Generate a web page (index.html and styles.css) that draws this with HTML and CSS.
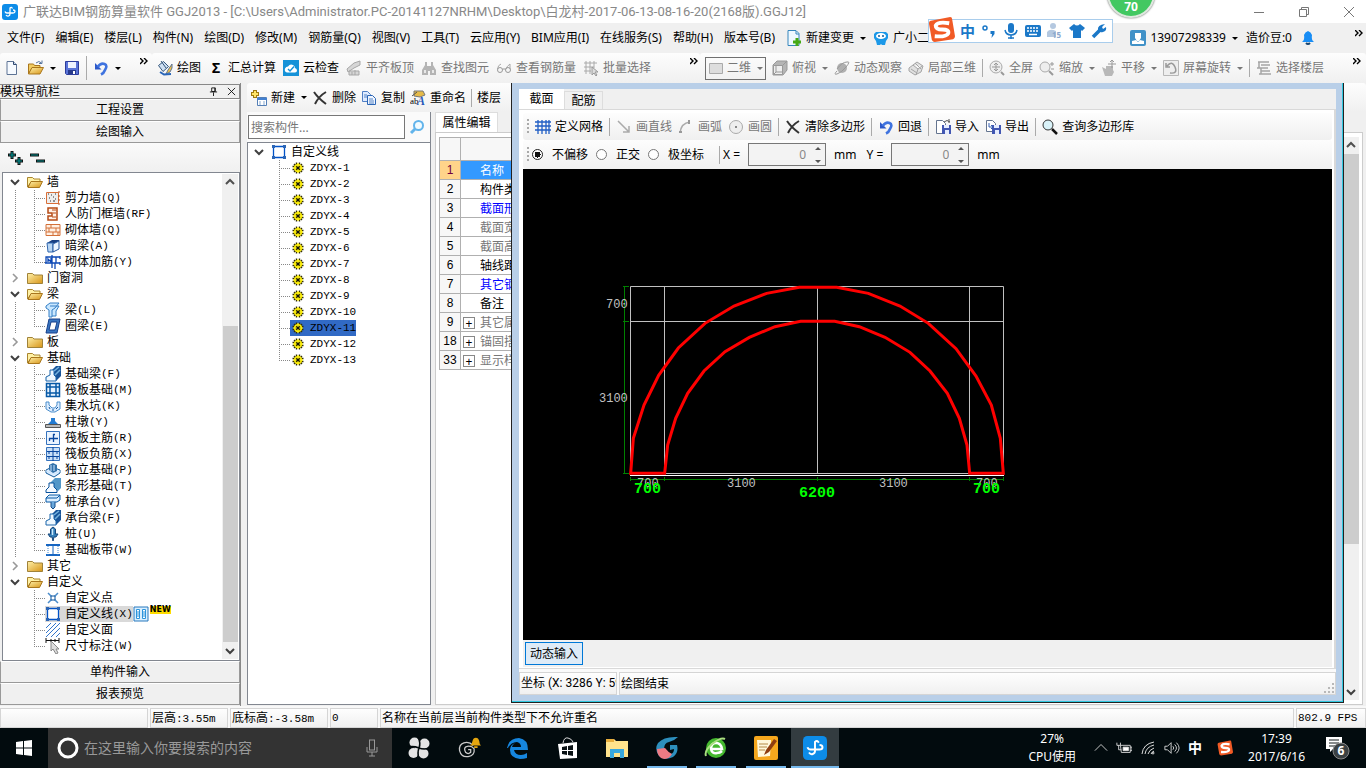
FILE: index.html
```html
<!DOCTYPE html>
<html lang="zh-CN">
<head>
<meta charset="utf-8">
<title>广联达BIM钢筋算量软件 GGJ2013</title>
<link rel="stylesheet" href="styles.css">
</head>
<body>
<svg class="sprite" aria-hidden="true">
  <defs>
    <linearGradient id="gold" x1="0" y1="0" x2="1" y2="1"><stop offset="0" stop-color="#fff0a8"/><stop offset="1" stop-color="#d79518"/></linearGradient>
  </defs>
  <symbol id="app" viewBox="0 0 16 16"><rect width="16" height="16" rx="3" fill="#0d8ce8"/><path d="M10.500 4.500Q9.500 2.500 8 4v6q0 1.500-1.500 2T4 11M3 7.500q.5 1.500 2 1.500h6q2 0 2-1.500T11 6" fill="none" stroke="#fff" stroke-width="1.300"/></symbol>
  <symbol id="new" viewBox="0 0 16 16"><path d="M3 1.500h6.500l3 3v10H3z" fill="#f6faff" stroke="#5d7395"/><path d="M9.500 1.500v3h3" fill="#c8d8f0" stroke="#30496f"/></symbol>
  <symbol id="open" viewBox="0 0 16 16"><path d="M.5 14V4h5l1 1.500H12V8H4z" fill="#f1cc62" stroke="#a9761c"/><path d="M.5 14L4 7.500h11.500L12 14z" fill="url(#gold)" stroke="#a9761c"/><path d="M8 3q3-3 5.500 0M14 .5v3h-3" fill="none" stroke="#56749e"/></symbol>
  <symbol id="save" viewBox="0 0 16 16"><path d="M1.500 1.500h13v13h-12l-1-1z" fill="#5a74d8" stroke="#2c3c9c"/><path d="M4 2h8v6H4z" fill="#eef3ff"/><path d="M4 10h8v4H4z" fill="#283a8c"/><path d="M9 11h2v3H9z" fill="#fff"/></symbol>
  <symbol id="undo" viewBox="0 0 16 16"><path d="M2 3v6.500h6.500z" fill="#2d58c8"/><path d="M4.500 7Q8 2.500 11.500 4T12 10q-1 3-4 4.500" fill="none" stroke="#3f73df" stroke-width="2.600"/></symbol>
  <symbol id="paint" viewBox="0 0 16 16"><path d="M1.500 5.500l5-4 5 5-5.500 5z" fill="#cfe0f2" stroke="#34567c"/><path d="M4 1l5 7" stroke="#34567c"/><path d="M15 4l-4 6-2 4 4-2 2-4z" fill="#f3c343" stroke="#5d7395"/><path d="M3 12l4 2.500L14 14" fill="none" stroke="#2965b8" stroke-width="2"/></symbol>
  <symbol id="cloud" viewBox="0 0 16 16"><rect width="16" height="16" fill="#1592d8"/><path d="M4 12.500q-3-1-2-4 1-2 3-2 2-3 5-1.500 2 1 2 3 2 .5 2 2.500t-2 2z" fill="#fff"/><path d="M5 9l2 2 4-4.500" fill="none" stroke="#1592d8" stroke-width="1.400"/></symbol>
  <symbol id="slab" viewBox="0 0 16 16"><path d="M1 9L8 3l6-2v4L8 8l-6 4zM3 11h10v4H3zM6 12v3M9 10v5" fill="#d6d6d6" stroke="#a7a7a7"/></symbol>
  <symbol id="find" viewBox="0 0 16 16"><path d="M4 2h2v4h4V2h2v3l3 5v5H9v-4H7v4H1v-5l3-5z" fill="#b4b4b4"/><path d="M3 10h2v3H3zm8 0h2v3h-2z" fill="#e8e8e8"/></symbol>
  <symbol id="glass" viewBox="0 0 16 16"><path d="M5 4Q2 5 1.500 9M10 9q1-3 4-5v5" fill="none" stroke="#aaa"/><circle cx="4" cy="10" r="2.500" fill="none" stroke="#999"/><circle cx="12" cy="10" r="2.500" fill="none" stroke="#999"/><path d="M6.500 9h3" stroke="#999"/></symbol>
  <symbol id="batch" viewBox="0 0 16 16"><path d="M1 3h13M1 7h10M1 11h7M3 1v13M7 1v13M11 1v7" stroke="#aaa"/><path d="M9 7v8l2-2 2 3 1-1-2-3h3z" fill="#ddd" stroke="#999"/></symbol>
  <symbol id="rect" viewBox="0 0 16 16"><path d="M1.500 3.500h13v10h-13z" fill="#ddd" stroke="#aaa"/></symbol>
  <symbol id="cube" viewBox="0 0 16 16"><path d="M1 5l4-4h10v9l-4 5H1z" fill="#b5b5b5" stroke="#999"/><path d="M1.500 5.500h9v9h-9z" fill="#eee" stroke="#999"/><path d="M10.500 5.500L15 1M4 6v6l-2 2M4 12h6" fill="none" stroke="#999"/></symbol>
  <symbol id="orbit" viewBox="0 0 16 16"><circle cx="8" cy="8" r="5" fill="#b0b0b0"/><path d="M3 11Q-1 15 3 14 7 13 12 7T13 2Q8 2 3 9" fill="none" stroke="#999"/></symbol>
  <symbol id="part" viewBox="0 0 16 16"><path d="M1 8l8-6 6 4-2 6-6 3-6-4zM5 5l5 4 4-3M10 9l-2 6M3 9l6 4M7 3l6 6" fill="#e0e0e0" stroke="#a5a5a5"/></symbol>
  <symbol id="full" viewBox="0 0 16 16"><circle cx="7" cy="7" r="6" fill="#eee" stroke="#aaa"/><path d="M12 12l3 3" stroke="#999" stroke-width="2"/><path d="M3 7h8M7 3v8M5 5l2-2 2 2M5 9l2 2 2-2" stroke="#999" fill="none"/></symbol>
  <symbol id="zoom" viewBox="0 0 16 16"><circle cx="6" cy="7" r="5" fill="#eee" stroke="#aaa"/><path d="M10 11l4 4" stroke="#999" stroke-width="2"/><path d="M11 4h4M13 2v4M12 9h3" stroke="#999"/></symbol>
  <symbol id="hand" viewBox="0 0 16 16"><path d="M1 7l4 2V6h7v4l1 2-2 4H4z" fill="#b8b8b8"/><path d="M7 4h8M11 0v8M9 2l2-2 2 2" stroke="#999" fill="none"/></symbol>
  <symbol id="rot" viewBox="0 0 16 16"><path d="M.5.5h15v15H.500z" fill="#eee" stroke="#b8b8b8"/><path d="M4 6q5-6 8 1t-5 6M3 3v4h4" fill="none" stroke="#999" stroke-width="1.500"/></symbol>
  <symbol id="floor" viewBox="0 0 16 16"><path d="M2 2h11M5 5h9M1 8h11M5 11h9M3 14h12M3 2v6M5 8v6" stroke="#a5a5a5" stroke-width="1.500"/></symbol>
  <symbol id="addc" viewBox="0 0 16 16"><path d="M4 0v8M0 4h8" stroke="#9e7b12" stroke-width="4"/><path d="M4 1v6M1 4h6" stroke="#ffe66b" stroke-width="2"/><path d="M6.500 7.500h9v8h-9z" fill="#fff" stroke="#547fb6"/><path d="M6 8h10v2H6z" fill="#4380d0"/><path d="M8 12h2m2 0h2m-6 2h2m2 0h2" stroke="#85a8cf"/></symbol>
  <symbol id="x" viewBox="0 0 16 16"><path d="M2 2q4 6 12 12M14 2Q7 6 3 14" fill="none" stroke="#333" stroke-width="2"/></symbol>
  <symbol id="copy" viewBox="0 0 16 16"><path d="M1.500 1.500h5l3 3v7h-8z" fill="#dfebff" stroke="#507fc4"/><path d="M6.500 5.500h5l3 3v6h-8z" fill="#eff5ff" stroke="#2b65b5"/><path d="M3 5h3M3 7h3M8 9h4M8 11h5M8 13h5" stroke="#5484c5"/></symbol>
  <symbol id="ren" viewBox="0 0 16 16"><path d="M4 1h9l2 4-5 2-6-1z" fill="#e5ba48" stroke="#777"/><path d="M2 6l5-4" stroke="#555"/><text x="0" y="14" font-size="9" font-family="Liberation Serif">ab</text><text x="7" y="15" font-size="12" font-weight="bold" font-style="italic" font-family="Liberation Serif" fill="#2557b8">A</text></symbol>
  <symbol id="mag" viewBox="0 0 16 16"><circle cx="9.500" cy="6.500" r="4.500" fill="#f1fbff" stroke="#62b4eb" stroke-width="2"/><path d="M6 10l-4 4" stroke="#62b4eb" stroke-width="3"/></symbol>
  <symbol id="mag2" viewBox="0 0 16 16"><circle cx="6" cy="6" r="5" fill="#d9f2f8" stroke="#333"/><path d="M10 10l5 5" stroke="#111" stroke-width="2.500"/></symbol>
  <symbol id="grid" viewBox="0 0 16 16"><path d="M3 1v14M7 1v14M11 1v14M14 1v14M0 3h16M0 7h16M0 11h16" stroke="#205ec4" stroke-width="1.300"/></symbol>
  <symbol id="line" viewBox="0 0 16 16"><path d="M2 2l11 11M13 7v6H7" fill="none" stroke="#aaa" stroke-width="1.500"/></symbol>
  <symbol id="arc" viewBox="0 0 16 16"><path d="M2 14Q3 4 12 3" fill="none" stroke="#aaa" stroke-width="1.500"/><path d="M1 13h3M11 1v4" stroke="#999" stroke-width="2"/></symbol>
  <symbol id="circ" viewBox="0 0 16 16"><circle cx="8" cy="8" r="6.500" fill="#eee" stroke="#aaa"/><path d="M8 7v2" stroke="#888" stroke-width="2"/></symbol>
  <symbol id="imp" viewBox="0 0 16 16"><path d="M1.500 1.500h6l3 3v10h-9z" fill="#fff" stroke="#64748f"/><path d="M7 6h9v9H7z" fill="#4257b2"/><path d="M9 6h5v3H9zM10 11h4v4h-4z" fill="#e6edff"/><path d="M9 3q3-3 6 0M14 0v4" fill="none" stroke="#555"/></symbol>
  <symbol id="exp" viewBox="0 0 16 16"><path d="M1.500 1.500h6l3 3v8h-9z" fill="#fff" stroke="#64748f"/><path d="M7 6h9v9H7z" fill="#4257b2"/><path d="M9 6h5v3H9zM10 11h4v4h-4z" fill="#e6edff"/><path d="M4 4v4h4M6 6l2 2-2 2" fill="none" stroke="#345eb2"/></symbol>
  <symbol id="change" viewBox="0 0 16 16"><path d="M2 .5h8l3 3v12H2z" fill="#eef8ff" stroke="#3686bd"/><path d="M10 1v3h3" fill="none" stroke="#3686bd"/><path d="M11 8v8M7 12h8" stroke="#45a914" stroke-width="3"/></symbol>
  <symbol id="robot" viewBox="0 0 16 16"><path d="M1 4l2-2h10l2 2v4l-2 3-1 4h-3l-1-1-1 1H4l-1-4-2-3z" fill="#1b98e8"/><ellipse cx="8" cy="6" rx="5" ry="3" fill="#fff"/><circle cx="6" cy="6" r="1" fill="#075c9f"/><circle cx="10" cy="6" r="1" fill="#075c9f"/></symbol>
  <symbol id="user" viewBox="0 0 16 16"><rect width="16" height="16" rx="2" fill="#4192c8"/><path d="M5 3h6v5l-2 3H7L5 8z" fill="#fff"/><path d="M2 14v-3l4-1 2 2 2-2 4 1v3z" fill="#fff"/></symbol>
  <symbol id="bell" viewBox="0 0 16 16"><path d="M2 12q3-2 2-7 1-3 4-4 3 1 4 4-1 5 2 7z" fill="#188df5"/><path d="M6 13q2 2 4 0" stroke="#174571" stroke-width="2" fill="none"/></symbol>
  <symbol id="more" viewBox="0 0 8 8"><path d="M0 0l3 3-3 3M4 0l3 3-3 3" fill="none" stroke="#000" stroke-width="1.400"/></symbol>
  <symbol id="down" viewBox="0 0 10 10"><path d="M1 3l4 4 4-4" fill="none" stroke="#404040" stroke-width="2"/></symbol>
  <symbol id="right" viewBox="0 0 10 10"><path d="M3 1l4 4-4 4" fill="none" stroke="#999" stroke-width="1.600"/></symbol>
  <symbol id="up" viewBox="0 0 10 10"><path d="M1 7l4-4 4 4" fill="none" stroke="#505050" stroke-width="2"/></symbol>
  <symbol id="fo" viewBox="0 0 16 16"><path d="M.5 13V3.500h5L7 5h6v3H4z" fill="#fff1a4" stroke="#a9852f"/><path d="M1 13.500l3-6h11.500l-3 6z" fill="url(#gold)" stroke="#a9761c"/></symbol>
  <symbol id="fc" viewBox="0 0 16 16"><path d="M.5 13.500v-10h5L7 5h8.500v8.500z" fill="url(#gold)" stroke="#a08239"/></symbol>
  <symbol id="poly" viewBox="0 0 16 16"><path d="M2.500 2.500h11v11h-11z" fill="#fff" stroke="#0052c8" stroke-width="1.300"/><path d="M1 1h3v3H1zM12 1h3v3h-3zM1 12h3v3H1zM12 12h3v3h-3z" fill="#2b65b5"/></symbol>
  <symbol id="gear" viewBox="0 0 16 16"><path d="M6.500 2.500v11M9.500 2.500v11M2.500 6.500h11M2.500 9.500h11M4 4l8 8M12 4l-8 8" stroke="#332f00" stroke-width="1.400"/><circle cx="8" cy="8" r="3.300" fill="none" stroke="#fff000" stroke-width="1.600"/><path d="M8 3v10M3 8h10" stroke="#fff000" stroke-width="1.200"/><circle cx="8" cy="8" r="1.300" fill="#111"/></symbol>
  <symbol id="t1" viewBox="0 0 16 16"><path d="M1.500 2.500h12v11h-12z" fill="#eee" stroke="#d96f38"/><path d="M3 4h1M6 5h1M10 4h1M4 8h1M8 7h1M5 11h1M10 9h1M8 11h2" stroke="#333"/><path d="M14 1v14" stroke="#b65020" stroke-dasharray="2 2"/></symbol>
  <symbol id="t2" viewBox="0 0 16 16"><path d="M3 2h9v12H3v-4h4V7H3z" fill="#fff1e6" stroke="#b64b16" stroke-width="1.500"/><path d="M7 4h4M8 7h3M7 11h4" stroke="#b64b16"/></symbol>
  <symbol id="t3" viewBox="0 0 16 16"><path d="M1 2.500h14v11H1zM1 6h14M1 10h14M6 2v4M11 6v4M4 6v4M8 10v4M13 10v4" fill="#fff0e3" stroke="#d37039"/></symbol>
  <symbol id="t4" viewBox="0 0 16 16"><path d="M2 5l5-3h8l-4 3z" fill="#183f82"/><path d="M2 5h6v9H3z" fill="#b9d6f3" stroke="#3167ae"/><path d="M8 6l6-3v8l-6 3z" fill="#edf6ff" stroke="#2356a0"/></symbol>
  <symbol id="t5" viewBox="0 0 16 16"><path d="M1 3h10v6H1zM7 1v13M10 9v6M0 9h12M11 3h4M15 2v3M11 9h4M15 8v3M3 8V5l3 3V4" fill="none" stroke="#0d48b5" stroke-width="1.300"/></symbol>
  <symbol id="t6" viewBox="0 0 16 16"><path d="M1 4l4-3h9l-4 5-3 2v7H4V8L1 6zM5 4h9l-3 5v5H7" fill="#c9e7ff" stroke="#347fc6"/></symbol>
  <symbol id="t7" viewBox="0 0 16 16"><path d="M4 1h11l-3 14H1z" fill="#3976c1" stroke="#163f8b"/><path d="M6 4h6l-2 8H4z" fill="#fff" stroke="#163f8b"/></symbol>
  <symbol id="t8" viewBox="0 0 16 16"><path d="M6 5l5-5h5v10l-5 5H8z" fill="#185499"/><path d="M1 14v-3l4-2V4h4v5l2 2v4H1z" fill="#eff8ff" stroke="#1a65aa"/><path d="M9 5l5-4M10 9l5-5" stroke="#75b3de" stroke-width="1.500"/></symbol>
  <symbol id="t9" viewBox="0 0 16 16"><path d="M1.500 1.500h13v13h-13zM5 2v12M11 2v12M2 5h12M2 11h12" fill="#e5f2ff" stroke="#0759a6" stroke-width="1.500"/></symbol>
  <symbol id="t10" viewBox="0 0 16 16"><path d="M1 4h3v3l3 3h3l2-3V4h3v7l-5 3H6l-5-3z" fill="#dcedff" stroke="#4b8ecc"/><path d="M4 9l1 2M7 12h2M11 11l2-2" stroke="#1457a0"/></symbol>
  <symbol id="t11" viewBox="0 0 16 16"><path d="M.5 10.500h15v3H.500z" fill="#bbb" stroke="#555"/><path d="M3 10l3-3V4h4v3l3 3z" fill="#237bd2"/></symbol>
  <symbol id="t12" viewBox="0 0 16 16"><path d="M1.500 1.500h13v13h-13z" fill="#eaf4ff" stroke="#3572bd"/><path d="M8.500 4v8M4 8.500h9M8 4.500h2M4.500 8v3" stroke="#08469e" stroke-width="1.300" fill="none"/></symbol>
  <symbol id="t13" viewBox="0 0 16 16"><path d="M1.500 1.500h13v13h-13z" fill="#c9e0f8" stroke="#3572bd"/><path d="M8 1v14M2 5.500h12M2 10.500h12M4 5v3M12 5v3M4 10v3M12 10v3" stroke="#08469e"/></symbol>
  <symbol id="t14" viewBox="0 0 16 16"><path d="M1 8l6-3 8 3v3l-6 4-8-4z" fill="#deefff" stroke="#135c9e"/><path d="M4 3l4-2 4 2v6L8 11 4 8z" fill="#3271aa"/><path d="M6 3v6M9 3v6M1 9l8 3 6-3" stroke="#cce5ff" fill="none"/></symbol>
  <symbol id="t15" viewBox="0 0 16 16"><path d="M5 5l5-5h6v10l-3 3z" fill="#5297c8"/><path d="M1 14.500V12l3-3V5h5v4l3 3v2.500z" fill="#f5faff" stroke="#07509b"/></symbol>
  <symbol id="t16" viewBox="0 0 16 16"><path d="M1 4l3-3h11v5l-3 2H1z" fill="#dcefff" stroke="#0759a6"/><path d="M6 8v5l2 2 2-2V8" fill="#69a8dc" stroke="#174c87"/><path d="M1 4h11l3-3" stroke="#0759a6" fill="none"/></symbol>
  <symbol id="t17" viewBox="0 0 16 16"><path d="M5.500 3L8 1l2.500 2v5H13l-2 3H9l-1 4-1-4H5L3 8h2.500z" fill="#347fb9" stroke="#17477b"/><path d="M7.500 3v6" stroke="#cce9fb" stroke-width="1.500"/></symbol>
  <symbol id="t18" viewBox="0 0 16 16"><path d="M1 3h14M1 13h14" stroke="#1766c2" stroke-width="2"/><path d="M3 4v9M13 4v9" stroke="#4386cd" stroke-dasharray="1 1"/><path d="M8 3v10" stroke="#1766c2"/></symbol>
  <symbol id="t19" viewBox="0 0 16 16"><path d="M3 3l4 4M13 3L9 7M3 13l4-4M13 13L9 9" stroke="#4a8cca" stroke-width="1.500"/><path d="M6 6h4v4H6z" fill="#fff" stroke="#07509b"/></symbol>
  <symbol id="t20" viewBox="0 0 16 16"><path d="M1 6l5-5M1 11L11 1M1 15L15 1M6 15l9-9M11 15l4-4" stroke="#3275ca"/></symbol>
  <symbol id="t21" viewBox="0 0 16 16"><path d="M1 0v5M14 0v5M1 2.500h13M6 1v3M10 1v3" stroke="#111"/><path d="M6 3v10l2-2 3 5 2-1-2-4h3z" fill="#ddd" stroke="#888"/></symbol>
  <symbol id="book" viewBox="0 0 16 16"><path d="M1 1h14v14H1z" fill="#d9efff" stroke="#2879bd"/><path d="M3.500 3.500h3v9h-3zM9.500 3.500h3v9h-3zM4 6h2M4 8h2M4 10h2M10 6h2M10 8h2M10 10h2" fill="#fff" stroke="#2c94dc"/></symbol>
  <symbol id="sogou" viewBox="0 0 28 28"><path d="M3 5l20-4q2 0 2 2l3 18q0 2-2 3L7 27q-2 0-3-2L1 8q0-3 2-3z" fill="#f15a25"/><path d="M22 7.500Q10 5.500 8 10q0 4 7 4 7 0 6 4-2 4-14 3" fill="none" stroke="#fff" stroke-width="4"/></symbol>
</svg>

<header class="title">
  <svg class="ic"><use href="#app"/></svg>
  <h1>广联达BIM钢筋算量软件 GGJ2013 - [C:\Users\Administrator.PC-20141127NRHM\Desktop\白龙村-2017-06-13-08-16-20(2168版).GGJ12]</h1>
  <div class="winbtns">
    <button aria-label="最小化"><svg viewBox="0 0 12 12"><path d="M1 6.500h10"/></svg></button>
    <button aria-label="还原"><svg viewBox="0 0 12 12"><path d="M1.500 3.500h7v7h-7zM3.500 3.500v-2h7v7h-2"/></svg></button>
    <button aria-label="关闭"><svg viewBox="0 0 12 12"><path d="M1 1l10 10M11 1L1 11"/></svg></button>
  </div>
</header>

<nav class="menu">
  <button>文件(F)</button><button>编辑(E)</button><button>楼层(L)</button><button>构件(N)</button><button>绘图(D)</button><button>修改(M)</button><button>钢筋量(Q)</button><button>视图(V)</button><button>工具(T)</button><button>云应用(Y)</button><button>BIM应用(I)</button><button>在线服务(S)</button><button>帮助(H)</button><button>版本号(B)</button>
  <button class="tb"><svg class="ic"><use href="#change"/></svg>新建变更<b class="caret"></b></button>
  <button class="tb"><svg class="ic"><use href="#robot"/></svg>广小二</button>
  <div class="account">
    <button class="tb"><svg class="ic"><use href="#user"/></svg>13907298339<b class="caret"></b></button>
    <span>造价豆:0</span><svg class="ic"><use href="#bell"/></svg>
    <svg class="more"><use href="#more"/></svg>
  </div>
</nav>

<div class="toolbar">
  <div class="bar files">
    <button aria-label="新建"><svg class="ic"><use href="#new"/></svg></button>
    <button class="tb" aria-label="打开"><svg class="ic"><use href="#open"/></svg><b class="caret"></b></button>
    <button aria-label="保存"><svg class="ic"><use href="#save"/></svg></button><i class="sep"></i>
    <button class="tb" aria-label="撤销"><svg class="ic"><use href="#undo"/></svg><b class="caret"></b></button>
    <svg class="more"><use href="#more"/></svg>
  </div>
  <div class="bar edit">
    <button class="tb"><svg class="ic"><use href="#paint"/></svg>绘图</button>
    <button class="tb"><span class="sigma">Σ</span>汇总计算</button>
    <button class="tb"><svg class="ic"><use href="#cloud"/></svg>云检查</button>
    <button class="tb" disabled><svg class="ic"><use href="#slab"/></svg>平齐板顶</button>
    <button class="tb" disabled><svg class="ic"><use href="#find"/></svg>查找图元</button>
    <button class="tb" disabled><svg class="ic"><use href="#glass"/></svg>查看钢筋量</button>
    <button class="tb" disabled><svg class="ic"><use href="#batch"/></svg>批量选择</button>
    <svg class="more"><use href="#more"/></svg>
  </div>
  <div class="bar view">
    <label class="combo"><svg class="ic"><use href="#rect"/></svg><select disabled aria-label="视图维度"><option>二维</option></select><b class="caret"></b></label>
    <button class="tb" disabled><svg class="ic"><use href="#cube"/></svg>俯视<b class="caret"></b></button>
    <button class="tb" disabled><svg class="ic"><use href="#orbit"/></svg>动态观察</button>
    <button class="tb" disabled><svg class="ic"><use href="#part"/></svg>局部三维</button><i class="sep"></i>
    <button class="tb" disabled><svg class="ic"><use href="#full"/></svg>全屏</button>
    <button class="tb" disabled><svg class="ic"><use href="#zoom"/></svg>缩放<b class="caret"></b></button>
    <button class="tb" disabled><svg class="ic"><use href="#hand"/></svg>平移<b class="caret"></b></button>
    <button class="tb" disabled><svg class="ic"><use href="#rot"/></svg>屏幕旋转<b class="caret"></b></button><i class="sep"></i>
    <button class="tb" disabled><svg class="ic"><use href="#floor"/></svg>选择楼层</button>
    <svg class="more"><use href="#more"/></svg>
  </div>
</div>

<main class="work">
  <aside class="nav">
    <div class="navhead"><h2>模块导航栏</h2>
      <button aria-label="固定"><svg viewBox="0 0 10 10"><path d="M3 1h4v4H3zM1 5.500h8M5 6v4M6.500 1v4"/></svg></button>
      <button aria-label="关闭"><svg viewBox="0 0 10 10"><path d="M1 1l8 8M9 1L1 9"/></svg></button></div>
    <button class="fold">工程设置</button>
    <button class="fold">绘图输入</button>
    <div class="pm"><svg viewBox="0 0 42 16"><path d="M6 1v8M2 5h8M13 7v8M9 11h8M24 5h9M30 11h9" stroke="#111" stroke-width="3"/><path d="M6 2v6M3 5h6M13 8v6M10 11h6M25 5h7M31 11h7" stroke="#008c8c" stroke-width="1.200"/></svg></div>
    <div class="treebox">
      <ul class="tree">
        <li><div class="node"><svg><use href="#down"/></svg><svg class="ic"><use href="#fo"/></svg>墙</div>
          <ul class="kids pass"><li><svg class="ic"><use href="#t1"/></svg>剪力墙<span class="en">(Q)</span></li><li><svg class="ic"><use href="#t2"/></svg>人防门框墙<span class="en">(RF)</span></li><li><svg class="ic"><use href="#t3"/></svg>砌体墙<span class="en">(Q)</span></li><li><svg class="ic"><use href="#t4"/></svg>暗梁<span class="en">(A)</span></li><li><svg class="ic"><use href="#t5"/></svg>砌体加筋<span class="en">(Y)</span></li></ul></li>
        <li><div class="node"><svg><use href="#right"/></svg><svg class="ic"><use href="#fc"/></svg>门窗洞</div></li>
        <li><div class="node"><svg><use href="#down"/></svg><svg class="ic"><use href="#fo"/></svg>梁</div>
          <ul class="kids pass"><li><svg class="ic"><use href="#t6"/></svg>梁<span class="en">(L)</span></li><li><svg class="ic"><use href="#t7"/></svg>圈梁<span class="en">(E)</span></li></ul></li>
        <li><div class="node"><svg><use href="#right"/></svg><svg class="ic"><use href="#fc"/></svg>板</div></li>
        <li><div class="node"><svg><use href="#down"/></svg><svg class="ic"><use href="#fo"/></svg>基础</div>
          <ul class="kids pass"><li><svg class="ic"><use href="#t8"/></svg>基础梁<span class="en">(F)</span></li><li><svg class="ic"><use href="#t9"/></svg>筏板基础<span class="en">(M)</span></li><li><svg class="ic"><use href="#t10"/></svg>集水坑<span class="en">(K)</span></li><li><svg class="ic"><use href="#t11"/></svg>柱墩<span class="en">(Y)</span></li><li><svg class="ic"><use href="#t12"/></svg>筏板主筋<span class="en">(R)</span></li><li><svg class="ic"><use href="#t13"/></svg>筏板负筋<span class="en">(X)</span></li><li><svg class="ic"><use href="#t14"/></svg>独立基础<span class="en">(P)</span></li><li><svg class="ic"><use href="#t15"/></svg>条形基础<span class="en">(T)</span></li><li><svg class="ic"><use href="#t16"/></svg>桩承台<span class="en">(V)</span></li><li><svg class="ic"><use href="#t8"/></svg>承台梁<span class="en">(F)</span></li><li><svg class="ic"><use href="#t17"/></svg>桩<span class="en">(U)</span></li><li><svg class="ic"><use href="#t18"/></svg>基础板带<span class="en">(W)</span></li></ul></li>
        <li><div class="node"><svg><use href="#right"/></svg><svg class="ic"><use href="#fc"/></svg>其它</div></li>
        <li><div class="node"><svg><use href="#down"/></svg><svg class="ic"><use href="#fo"/></svg>自定义</div>
          <ul class="kids"><li><svg class="ic"><use href="#t19"/></svg>自定义点</li><li><span class="cur"><svg class="ic"><use href="#poly"/></svg>自定义线<span class="en">(X)</span></span><svg class="ic"><use href="#book"/></svg><em class="newtag">NEW</em></li><li><svg class="ic"><use href="#t20"/></svg>自定义面</li><li><svg class="ic"><use href="#t21"/></svg>尺寸标注<span class="en">(W)</span></li></ul></li>
      </ul>
      <div class="scroll low"><svg><use href="#up"/></svg><i></i><svg><use href="#down"/></svg></div>
    </div>
    <button class="fold">单构件输入</button>
    <button class="fold">报表预览</button>
  </aside>

  <section class="right">
    <div class="bar parts">
      <button class="tb"><svg class="ic"><use href="#addc"/></svg>新建<b class="caret"></b></button>
      <button class="tb"><svg class="ic"><use href="#x"/></svg>删除</button>
      <button class="tb"><svg class="ic"><use href="#copy"/></svg>复制</button>
      <button class="tb"><svg class="ic"><use href="#ren"/></svg>重命名</button><i class="sep"></i>
      <button class="tb">楼层</button>
    </div>
    <div class="cols">
      <div class="comps">
        <div class="search"><input type="text" placeholder="搜索构件..." aria-label="搜索构件"><button aria-label="搜索"><svg class="ic"><use href="#mag"/></svg></button></div>
        <div class="complist">
          <div class="node"><svg><use href="#down"/></svg><svg class="ic"><use href="#poly"/></svg>自定义线</div>
          <ul class="kids gears">
            <li><svg class="ic"><use href="#gear"/></svg><span class="en">ZDYX-1</span></li><li><svg class="ic"><use href="#gear"/></svg><span class="en">ZDYX-2</span></li><li><svg class="ic"><use href="#gear"/></svg><span class="en">ZDYX-3</span></li><li><svg class="ic"><use href="#gear"/></svg><span class="en">ZDYX-4</span></li><li><svg class="ic"><use href="#gear"/></svg><span class="en">ZDYX-5</span></li><li><svg class="ic"><use href="#gear"/></svg><span class="en">ZDYX-6</span></li><li><svg class="ic"><use href="#gear"/></svg><span class="en">ZDYX-7</span></li><li><svg class="ic"><use href="#gear"/></svg><span class="en">ZDYX-8</span></li><li><svg class="ic"><use href="#gear"/></svg><span class="en">ZDYX-9</span></li><li><svg class="ic"><use href="#gear"/></svg><span class="en">ZDYX-10</span></li><li><span class="cur sel"><svg class="ic"><use href="#gear"/></svg><span class="en">ZDYX-11</span></span></li><li><svg class="ic"><use href="#gear"/></svg><span class="en">ZDYX-12</span></li><li><svg class="ic"><use href="#gear"/></svg><span class="en">ZDYX-13</span></li>
          </ul>
        </div>
      </div>
      <div class="props">
        <button class="ptab">属性编辑</button>
        <div class="pbody">
          <table>
            <thead><tr><th></th><th></th></tr></thead>
            <tbody>
              <tr class="on"><th>1</th><td>名称</td></tr>
              <tr><th>2</th><td>构件类型</td></tr>
              <tr class="blue"><th>3</th><td>截面形状</td></tr>
              <tr class="gray"><th>4</th><td>截面宽度</td></tr>
              <tr class="gray"><th>5</th><td>截面高度</td></tr>
              <tr><th>6</th><td>轴线距左边线</td></tr>
              <tr class="blue"><th>7</th><td>其它钢筋</td></tr>
              <tr><th>8</th><td>备注</td></tr>
              <tr class="gray"><th>9</th><td class="more-row"><button aria-label="展开">+</button>其它属性</td></tr>
              <tr class="gray"><th>18</th><td class="more-row"><button aria-label="展开">+</button>锚固搭接</td></tr>
              <tr class="gray"><th>33</th><td class="more-row"><button aria-label="展开">+</button>显示样式</td></tr>
            </tbody>
          </table>
          <div class="scroll high"><svg><use href="#up"/></svg><i></i><svg><use href="#down"/></svg></div>
        </div>
      </div>
    </div>
  </section>
</main>

<footer class="status"><span class="s1"></span><span class="s2">层高<span class="en">:3.55m</span></span><span class="s3">底标高<span class="en">:-3.58m</span></span><span class="s4 en">0</span><span class="s5">名称在当前层当前构件类型下不允许重名</span><span class="s6 en">802.9 FPS</span></footer>

<footer class="taskbar">
  <button class="start" aria-label="开始"><svg viewBox="0 0 16 16"><path d="M0 2l7-1v6.500H0zM8 1l8-1v7.500H8zM0 8.500h7V15l-7-1zM8 8.500h8V16l-8-1z" fill="#fff"/></svg></button>
  <label class="ask"><svg viewBox="0 0 22 22"><circle cx="11" cy="11" r="9" fill="none" stroke="#fff" stroke-width="3"/></svg><input type="text" placeholder="在这里输入你要搜索的内容" aria-label="搜索"><svg class="mic" viewBox="0 0 12 18"><rect x="3.500" y="1" width="5" height="10" fill="none" stroke="#999"/><path d="M1 8v5h10V8M6 13v4M3 17h6" fill="none" stroke="#999"/></svg></label>
  <div class="apps">
    <button aria-label="搜狗"><svg viewBox="0 0 24 24"><g fill="#e4e4e4"><circle cx="7.500" cy="6.500" r="5"/><circle cx="17.500" cy="7.500" r="5"/><circle cx="6.500" cy="17" r="5"/><circle cx="16.500" cy="17.500" r="5"/><circle cx="12" cy="12" r="4"/></g><path d="M12 12Q14 7 11 1M12 12q5 2 11 0M12 12q-2 5 0 11M12 12q-5-2-11-1" fill="none" stroke="#020a0c" stroke-width="1.600"/></svg></button>
    <button aria-label="提醒"><svg viewBox="0 0 28 28"><path d="M19 11Q14 6 8 8T3 17q2 8 10 7t7-9q-3-4-8-3t-2 7q3 3 6 0v-3h-3" fill="none" stroke="#ccc" stroke-width="1.500"/><path d="M15 11q3-2 3-5 1-4 4-4 3 0 4 4 0 3 2 5zM20 12h4v2h-4z" fill="#e5a60e"/></svg></button>
    <button aria-label="Edge"><svg viewBox="0 0 24 24"><path d="M1 12Q3 2 13 2q9 1 9 12H8q1 5 7 5 3 0 6-2v5q-3 1-7 1-10-1-10-9 0-5 5-7-3 2-3 4h9q0-4-4-5-6 0-9 6z" fill="#1686df"/></svg></button>
    <button aria-label="商店"><svg viewBox="0 0 24 24"><path d="M2 8l19-2v16l-17 1z" fill="#fff"/><path d="M7 7q1-6 5-5t5 4" fill="none" stroke="#ddd"/><path d="M6 11l5-1v4H6zM12 10l5-1v5h-5zM6 15h5v4l-5-1zM12 15h5v5l-5-1z" fill="#091114"/></svg></button>
    <button aria-label="文件资源管理器"><svg viewBox="0 0 24 24"><path d="M1 3h8l2 2h12v16H1z" fill="#ffe38c"/><path d="M1 3h8v3H1z" fill="#e9af3d"/><path d="M5 13h14v9h-4v-5H9v5H5z" fill="#38a7dc"/></svg></button>
    <button class="run" aria-label="浏览器"><svg viewBox="0 0 24 24"><path d="M23 1Q19 5 14 6 9 7 9 13q0 4 4 5h3q3-1 3-5l-4 1V9h7q2 8-4 12-8 4-14-1-5-7-1-13Q9 0 23 1z" fill="#2d8fbd"/><path d="M2 13l8-1q3 4 7 6-4 7-11 4-4-3-4-9z" fill="#ef7b84"/></svg></button>
    <button class="run" aria-label="360"><svg viewBox="0 0 24 24"><circle cx="12" cy="12" r="10" fill="#45b82f"/><path d="M6 13h12q-1-6-6-6t-5 6q1 5 6 4 3 0 5-2" fill="none" stroke="#fff" stroke-width="2.500"/><path d="M2 20Q0 15 8 8 17 1 21 3" fill="none" stroke="#a8df7f" stroke-width="2"/></svg></button>
    <button class="run" aria-label="笔记"><svg viewBox="0 0 24 24"><rect width="24" height="24" rx="2" fill="#f5a71d"/><path d="M3 4h14l-1 16-12 1z" fill="#fff8dc"/><path d="M5 8h9M5 11h8M5 14h6" stroke="#b48a49"/><path d="M20 3l-8 11-2 5 5-3 8-11z" fill="#8f3d0f"/></svg></button>
    <button class="run active" aria-label="广联达"><svg><use href="#app"/></svg></button>
  </div>
  <div class="tray">
    <div class="cpu">27%<br>CPU使用</div>
    <svg viewBox="0 0 16 16" class="w14"><path d="M1 11l7-7 7 7"/></svg>
    <svg viewBox="0 0 18 16"><path d="M5 5h11v8H6zM16 7h2v4h-2M1 2v3h4V2M3 5v5h3"/><path d="M8 7h6v4H8z" fill="#fff"/></svg>
    <svg viewBox="0 0 16 16"><path d="M2 14Q3 4 14 2M5 14q1-7 9-9M8 14q1-4 6-6M11 14q1-2 3-3"/><circle cx="13" cy="13" r="1"/></svg>
    <svg viewBox="0 0 18 16"><path d="M1 6h3l4-4v12l-4-4H1zM10 6q2 2 0 4M12 4q4 4 0 8M14 2q6 6 0 12"/></svg>
    <span class="ime">中</span>
    <svg class="so"><use href="#sogou"/></svg>
    <time>17:39<br>2017/6/16</time>
    <button class="note" aria-label="通知"><svg viewBox="0 0 24 24"><path d="M0 1h16v12H7l-3 3v-3H0z" fill="#fff" stroke="none"/><path d="M3 4h10M3 7h10M3 10h6" stroke="#10191b"/><circle cx="15" cy="15" r="8" fill="#3b4143" stroke="#888"/><text x="15" y="19" text-anchor="middle">6</text></svg></button>
  </div>
</footer>

<section class="dialog">
  <div class="tabs"><button class="cur">截面</button><button>配筋</button></div>
  <div class="page">
    <div class="bar drawbar"><i class="grip"></i>
      <button class="tb"><svg class="ic"><use href="#grid"/></svg>定义网格</button><i class="sep"></i>
      <button class="tb" disabled><svg class="ic"><use href="#line"/></svg>画直线</button>
      <button class="tb" disabled><svg class="ic"><use href="#arc"/></svg>画弧</button>
      <button class="tb" disabled><svg class="ic"><use href="#circ"/></svg>画圆</button><i class="sep"></i>
      <button class="tb"><svg class="ic"><use href="#x"/></svg>清除多边形</button><i class="sep"></i>
      <button class="tb"><svg class="ic"><use href="#undo"/></svg>回退</button><i class="sep"></i>
      <button class="tb"><svg class="ic"><use href="#imp"/></svg>导入</button>
      <button class="tb"><svg class="ic"><use href="#exp"/></svg>导出</button><i class="sep"></i>
      <button class="tb"><svg class="ic"><use href="#mag2"/></svg>查询多边形库</button>
    </div>
    <div class="bar offset"><i class="grip"></i>
      <div class="radios"><label><input type="radio" name="off" checked>不偏移</label><label><input type="radio" name="off">正交</label><label><input type="radio" name="off">极坐标</label></div>
      <i class="sep"></i>
      <label class="num">X =<span><input type="text" value="0" disabled><svg viewBox="0 0 8 20"><path d="M1 5l3-3 3 3zM1 15l3 3 3-3z"/></svg></span>mm</label>
      <label class="num">Y =<span><input type="text" value="0" disabled><svg viewBox="0 0 8 20"><path d="M1 5l3-3 3 3zM1 15l3 3 3-3z"/></svg></span>mm</label>
    </div>
    <div class="canvas">
      <svg viewBox="0 0 809 471" preserveAspectRatio="xMinYMin meet">
        <path d="M107.500 117.500h373v187h-373zM107 152.500h373M141.500 117v187M294.500 117v187M446.500 117v187" fill="none" stroke="#c0c0c0"/>
        <path d="M107 306.500h374" stroke="#fff"/>
        <path d="M101.500 117v187M100 117.500h6M100 152.500h6M100 304.500h6M107 310.500h374M107.500 308v4M141.500 308v4M294.500 308v4M446.500 308v4M480.500 308v4" fill="none" stroke="#008000"/>
        <g transform="translate(67 101) scale(.33333)"><path d="M122 610L130 505 162 405 206 316 265 234 345 160 432 108 530 70 628 52H740L835 70 930 108 1015 160 1098 236 1158 318 1204 405 1231 505 1240 610H1139L1131 525 1108 445 1072 370 1020 303 960 247 885 202 808 170 734 154H632L555 170 478 202 405 245 342 303 293 370 257 445 233 525 224 610z" fill="none" stroke="#f00" stroke-width="9"/></g>
        <g class="dim"><text x="83" y="139">700</text><text x="76" y="233">3100</text><text x="114" y="318">700</text><text x="204" y="318">3100</text><text x="356" y="318">3100</text><text x="453" y="318">700</text></g>
        <g class="total"><text x="111" y="324">700</text><text x="276" y="328">6200</text><text x="450" y="324">700</text></g>
      </svg>
    </div>
    <div class="dyn"><button>动态输入</button></div>
  </div>
  <div class="dstat"><span class="coord">坐标 (X: 3286 Y: 59</span><span class="msg">绘图结束<svg viewBox="0 0 12 12"><path d="M9 1h2v2H9zM5 5h2v2H5zM9 5h2v2H9zM1 9h2v2H1zM5 9h2v2H5zM9 9h2v2H9z" fill="#b8b8b8"/></svg></span></div>
</section>

<div class="imebar">
  <svg class="logo"><use href="#sogou"/></svg><b>中</b>
  <svg viewBox="0 0 16 16"><circle cx="4" cy="5" r="2" fill="none" stroke="#1b78c8" stroke-width="1.500"/><path d="M9.500 8h4v3l-3 4 .5-4H9.500z" fill="#1b78c8"/></svg>
  <svg viewBox="0 0 16 16"><rect x="5" y="0" width="6" height="10" rx="3" fill="#1b78c8"/><path d="M2 7q1 5 6 5t6-5M8 12v4M5 15h6" fill="none" stroke="#1b78c8" stroke-width="1.500"/></svg>
  <svg viewBox="0 0 16 16"><rect y="2" width="16" height="12" rx="2" fill="#1b78c8"/><path d="M2 5h12M2 8h12" stroke="#fff" stroke-width="1.500" stroke-dasharray="2 1"/><path d="M4 11.500h8" stroke="#fff" stroke-width="1.500"/></svg>
  <svg viewBox="0 0 16 16"><circle cx="6" cy="3" r="3" fill="#b4c8e0"/><path d="M0 14V9q3-4 9-1v6z" fill="#b4c8e0"/><text x="5" y="15" font-size="8" font-weight="bold" fill="#8ba9ce">15</text></svg>
  <svg viewBox="0 0 16 16"><path d="M5 1q3 3 6 0l5 4-3 3-1-1v8H4V7L3 8 0 5z" fill="#1b78c8"/></svg>
  <svg viewBox="0 0 16 16"><path d="M2 14l7-7" stroke="#1b78c8" stroke-width="3.500"/><path d="M14 1l-3 3 1 2 3-2q1 4-3 5T7 7q-1-5 7-6z" fill="#1b78c8"/></svg>
</div>
<div class="speed">70</div>
</body>
</html>
```
FILE: styles.css
```css
* { box-sizing: border-box; }
html, body { height: 100%; }
body {
  margin: 0; display: flex; flex-direction: column; position: relative; overflow: hidden;
  font: 12px/16px "Noto Sans", "Noto Sans CJK SC", sans-serif; color: #000; background: #f0f0f0;
}
button, input, select { font: inherit; color: inherit; background: none; border: 0; padding: 0; margin: 0; }
button { display: inline-flex; align-items: center; white-space: nowrap; }
ul { list-style: none; margin: 0; padding: 0; }
h1, h2 { margin: 0; font-size: 12px; font-weight: normal; white-space: nowrap; }
.sprite { position: absolute; width: 0; height: 0; }
.ic { width: 16px; height: 16px; flex: none; }
.en { font: 11px/16px "Liberation Mono", monospace; }
.more { width: 8px; height: 8px; flex: none; margin-left: auto; align-self: flex-start; }
.caret { border: 3px solid transparent; border-top-color: currentColor; border-bottom: 0; margin-left: 2px; }

.title { height: 23px; flex: none; display: flex; align-items: center; gap: 5px; padding-left: 2px; background: #fff; color: #888; }
.title h1 { font: 13px/16px Roboto, "Noto Sans CJK SC", sans-serif; }
.winbtns { margin-left: auto; display: flex; gap: 33px; padding-right: 11px; }
.winbtns svg { width: 12px; height: 12px; fill: none; stroke: #777; }

.menu { height: 30px; flex: none; display: flex; align-items: center; gap: 11px; padding: 0 3px 0 7px; white-space: nowrap; }
.menu .tb { margin-right: -4px; }
.account { margin-left: auto; display: flex; align-items: center; gap: 8px; }
.account .more { margin-left: 31px; }
.menu .account .tb { margin: 0; }
.tb { gap: 4px; }
.tb:disabled { color: #777; }

.toolbar { height: 30px; flex: none; display: flex; }
.bar { display: flex; align-items: center; background: linear-gradient(#fdfdfd, #f0f0f0); border-radius: 3px; }
.sep { width: 1px; height: 18px; background: #aaa; flex: none; }
.files { flex: 0 0 152px; gap: 8px; padding: 0 4px; }
.files .more, .edit .more, .view .more { margin-top: 5px; }
.files .tb { gap: 4px; }
.files .sep { height: 24px; margin: 0 -2px 0 -2px; }
.edit { flex: 0 0 548px; gap: 7px; padding: 0 2px 0 5px; }
.view { flex: 1; gap: 6px; padding: 0 5px; }
.sigma { width: 16px; text-align: center; font-weight: bold; font-size: 14px; }
.combo { display: flex; align-items: center; height: 23px; width: 61px; border: 1px solid #707070; padding: 0 4px 0 2px; color: #777; gap: 3px; }
.combo select { appearance: none; width: 28px; opacity: 1; }

.work { flex: 1; display: flex; gap: 6px; min-height: 0; }
.nav { width: 241px; flex: none; display: flex; flex-direction: column; padding-bottom: 1px; border-right: 1px solid #888; }
.navhead { height: 15px; margin-top: 1px; border: 1px solid #888; border-left: 0; display: flex; align-items: center; gap: 9px; padding-right: 3px; }
.navhead h2 { flex: 1; }
.navhead svg { width: 9px; height: 9px; fill: none; stroke: #111; }
.fold { height: 22px; flex: none; justify-content: center; border: 1px solid #999; border-top-color: #fff; background: #f0f0f0; }
.pm { height: 29px; flex: none; padding: 7px 6px; background: linear-gradient(#fafafa, #f0f0f0); }
.pm svg { width: 42px; height: 16px; }
.treebox { flex: 1; min-height: 0; margin-left: 2px; border: 1px solid #828790; background: #fff; display: flex; justify-content: space-between; padding: 1px; }
.node { height: 16px; display: flex; align-items: center; gap: 4px; padding-left: 5px; white-space: nowrap; }
.node svg:first-child { width: 12px; height: 10px; margin-right: 2px; }
.kids { padding-left: 30px; }
.kids.pass { background: repeating-linear-gradient(#888 0 1px, #fff 1px 2px) 11px 0 / 1px 100% no-repeat; }
.kids li { display: flex; align-items: center; height: 16px; white-space: nowrap; }
.kids li > .ic:first-child, .cur .ic { margin-right: 4px; }
.kids li::before {
  content: ""; width: 11px; height: 16px; flex: none;
  background: repeating-linear-gradient(#888 0 1px, transparent 1px 2px) 0 0 / 1px 16px no-repeat,
    repeating-linear-gradient(90deg, #888 0 1px, transparent 1px 2px) 0 8px / 11px 1px no-repeat;
}
.kids li:last-child::before { background-size: 1px 8px, 11px 1px; }
.kids .cur { display: flex; background: #d9d9d9; }
.kids .cur.sel { background: #316ac5; }
.newtag { font: bold 8px/8px "DejaVu Sans", sans-serif; background: #ffdc00; align-self: flex-start; margin-left: 1px; }
.scroll { width: 16px; display: flex; flex-direction: column; align-items: center; justify-content: space-between; background: #f0f0f0; padding: 3px 0; flex: none; }
.scroll svg { width: 10px; height: 10px; flex: none; }
.scroll i { background: #cdcdcd; width: 15px; }
.scroll.low i { flex: 0 0 66%; margin-top: auto; margin-bottom: 4px; }
.scroll.high i { flex: 0 0 70%; margin: 4px 0 auto; }

.right { flex: 1; min-width: 0; display: flex; flex-direction: column; }
.parts { height: 29px; flex: none; gap: 5px; padding-left: 4px; }
.cols { flex: 1; min-height: 0; display: flex; gap: 4px; }
.comps { width: 184px; flex: none; display: flex; flex-direction: column; }
.search { height: 30px; display: flex; align-items: center; gap: 4px; padding: 2px 1px; border-right: 1px solid #828790; background: #fafafa; }
.search input { width: 157px; height: 24px; border: 1px solid #777; background: #fff; padding: 0 2px; }
.search input::placeholder { color: #777; opacity: 1; }
.complist { flex: 1; border: 1px solid #828790; background: #fff; padding: 1px 0; margin-bottom: 1px; }
.kids.gears { padding-left: 31px; }
.props { flex: 1; display: flex; flex-direction: column; background: #f0f0f0; }
.ptab { width: 63px; height: 20px; justify-content: center; background: #fff; border: 1px solid #ddd; border-bottom: 0; }
.pbody { flex: 1; background: #fff; margin: 0 3px 1px 0; border: 1px solid #ccc; padding: 4px 3px; display: flex; align-items: stretch; }
.pbody table { flex: 1; align-self: flex-start; border-collapse: collapse; table-layout: fixed; width: 100%; border: 1px solid #aaa; }
.pbody th { width: 21px; font: 12px/17px "Liberation Sans", sans-serif; background: #f7f7f7; }
.pbody th:last-child { width: auto; }
.pbody th, .pbody td { height: 19px; border: 1px solid #b0b0b0; padding: 0; line-height: 17px; }
.pbody thead th { height: 23px; }
.pbody td { padding-left: 19px; white-space: nowrap; overflow: hidden; }
.pbody td.more-row { padding-left: 2px; }
.more-row button { width: 12px; height: 12px; border: 1px solid #888; justify-content: center; margin-right: 5px; color: #000; vertical-align: middle; }
.on td { background: #3399ff; color: #fff; }
.pbody .on th { background: #ffd48a; color: #700040; }
.blue td { color: #0000ff; }
.gray td { color: #777; }

.status { height: 22px; flex: none; display: flex; gap: 2px; padding-top: 2px; background: #f8f8f8; white-space: nowrap; }
.status > span { border: 1px solid #d5d5d5; padding: 0 1px; line-height: 18px; background: linear-gradient(#fefefe, #f0f0f0); }
.status .s1 { flex: 0 0 148px; }
.status .s2 { flex: 0 0 78px; }
.status .s3 { flex: 0 0 98px; }
.status .s4 { flex: 0 0 48px; }
.status .s5 { flex: 1; }
.status .s6 { flex: 0 0 70px; }

.taskbar { height: 40px; flex: none; display: flex; background: #020b0e; color: #fff; }
.start { width: 48px; justify-content: center; }
.start svg { width: 16px; height: 16px; }
.ask { width: 344px; background: #333; display: flex; align-items: center; padding: 0 14px 0 9px; gap: 5px; }
.ask svg { width: 22px; height: 22px; }
.ask .mic { width: 12px; height: 18px; }
.ask input { flex: 1; font-size: 14px; }
.ask input::placeholder { color: #999; opacity: 1; }
.apps { width: 447px; padding-left: 3px; display: flex; justify-content: space-between; }
.apps button { width: 48px; justify-content: center; }
.apps svg { width: 24px; height: 24px; }
.run { background: linear-gradient(#76b9ed, #76b9ed) bottom / 40px 2px no-repeat; }
.apps .run { background: linear-gradient(#76b9ed, #76b9ed) bottom / 40px 2px no-repeat; }
.apps .run.active { background: linear-gradient(#76b9ed, #76b9ed) bottom / 48px 2px no-repeat #333c40; }
.tray { margin-left: auto; display: flex; align-items: center; gap: 8px; padding-right: 16px; text-align: center; line-height: 18px; }
.tray svg { width: 16px; height: 16px; fill: none; stroke: #ddd; stroke-width: 1; }
.tray .w14 { width: 14px; margin-left: 10px; }
.tray .so { stroke: none; margin: 0 7px; }
.tray .ime { font-size: 14px; font-weight: bold; }
.tray .note { margin-left: 13px; }
.tray .note svg { width: 24px; height: 24px; }
.note text { fill: #fff; stroke: none; font-size: 12px; font-weight: bold; }

.dialog {
  position: absolute; inset: 83px 22px 65px 511px; display: flex; flex-direction: column;
  background: #b9cfe8; border: 1px solid #222; border-top: 0; padding: 6px 7px 7px; box-shadow: inset -1px -1px #30c8e0;
}
.tabs { display: flex; align-items: flex-end; height: 20px; background: #f0f0f0; flex: none; }
.tabs button { width: 39px; height: 18px; justify-content: center; border: 1px solid #ddd; border-bottom: 0; }
.tabs .cur { width: 45px; height: 20px; background: #fff; border: 0; }
.page { flex: 1; min-height: 0; display: flex; flex-direction: column; background: #fff; padding: 3px 2px 1px 4px; border: 1px solid #d9d9d9; border-width: 1px 2px 1px 0; }
.drawbar { height: 27px; gap: 6px; padding-left: 4px; flex: none; }
.grip { width: 2px; height: 15px; background: repeating-linear-gradient(#aaa 0 2px, transparent 2px 4px); }
.offset { height: 29px; gap: 3px; padding-left: 4px; flex: none; }
.radios { display: flex; gap: 8px; width: 184px; }
.radios label { display: flex; align-items: center; gap: 9px; }
.radios input { appearance: none; width: 11px; height: 11px; border: 1px solid #777; border-radius: 50%; background: #fff; }
.radios input:checked { background: radial-gradient(#111 0 3px, #fff 3px); border-color: #222; }
.num { display: flex; align-items: center; gap: 8px; margin-right: 7px; }
.num span { width: 78px; height: 23px; border: 1px solid #777; background: #f3f3f3; display: flex; align-items: center; color: #888; }
.num input { flex: 1; min-width: 0; text-align: right; padding-right: 8px; }
.num svg { width: 8px; height: 20px; margin-right: 3px; fill: #555; }
.canvas { flex: 1; min-height: 0; background: #000; }
.canvas svg { display: block; width: 100%; height: 100%; }
.dim { font: 12px "Liberation Mono", monospace; fill: #c0c0c0; }
.total { font: bold 15px "Liberation Mono", monospace; fill: #0f0; }
.dyn { height: 27px; flex: none; padding: 2px; background: #f0f0f0; }
.dyn button { width: 58px; height: 23px; justify-content: center; border: 1px solid #0078d7; background: #deebf7; }
.dstat { display: flex; gap: 2px; flex: none; height: 26px; padding-top: 3px; background: #fafafa; white-space: nowrap; }
.dstat span { border: 1px solid #d5d5d5; line-height: 21px; padding-left: 1px; background: linear-gradient(#fefefe, #f0f0f0); overflow: hidden; }
.dstat .coord { width: 98px; font-family: Roboto, "Noto Sans CJK SC", sans-serif; }
.msg { flex: 1; display: flex; justify-content: space-between; align-items: flex-end; }
.msg svg { width: 12px; height: 12px; }

.imebar { position: absolute; top: 19px; left: 928px; width: 185px; height: 24px; background: #fff; border: 1px solid #a9cdec; display: flex; align-items: center; gap: 6px; color: #1b78c8; }
.imebar svg { width: 16px; height: 16px; flex: none; }
.imebar .logo { width: 27px; height: 27px; margin: -3px -1px 0 -1px; }
.imebar b { font-size: 15px; }
.speed { position: absolute; top: -30px; left: 1107px; width: 48px; height: 48px; border-radius: 50%; background: #42c861; border: 2px solid #dfe8df; box-shadow: 0 0 2px #555; color: #fff; font-weight: bold; text-align: center; padding-top: 28px; line-height: 14px; }
```
